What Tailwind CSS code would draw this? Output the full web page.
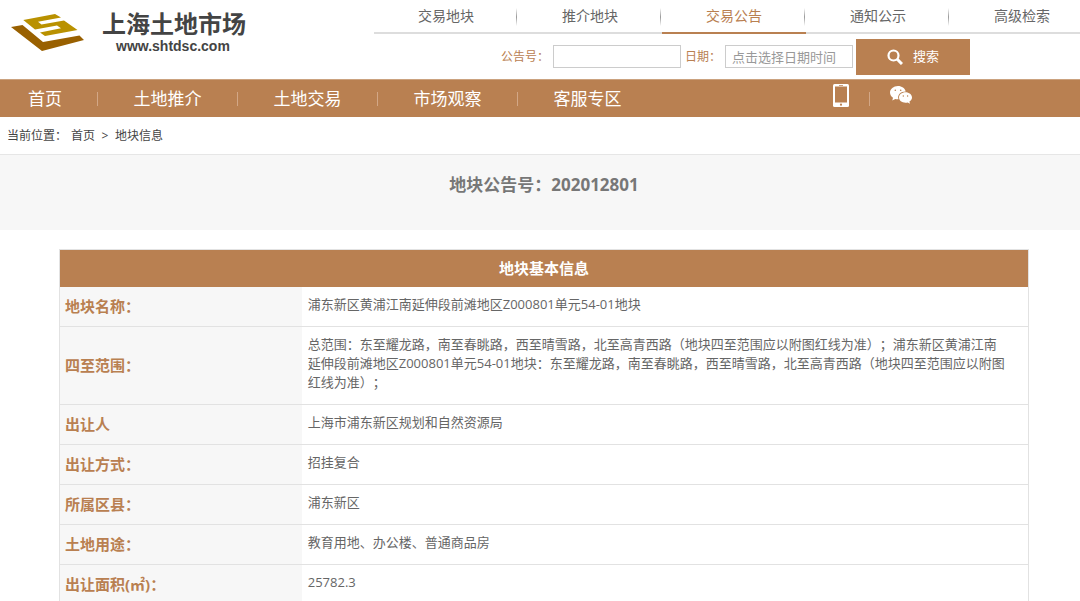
<!DOCTYPE html>
<html lang="zh-CN">
<head>
    <meta charset="UTF-8">
    <meta name="viewport" content="width=device-width, initial-scale=1.0">
    <title>上海土地市场 - 地块信息</title>
    <script src="https://cdn.jsdelivr.net/npm/@tailwindcss/browser@4"></script>
</head>
<body class="bg-white text-[#666] font-['Open_Sans','Noto_Sans_CJK_SC',sans-serif] [text-spacing-trim:space-all] overflow-x-hidden">
    <header class="flex h-[79px]">
        <a href="#" class="flex w-[374px] shrink-0 pt-2 pl-2.5 text-[#444]">
            <svg class="mt-1 h-11 w-[76px]" viewBox="0 0 76 44" aria-hidden="true">
                <path fill="#996000" d="M1 15 12.500 13 33 30 69.500 23.500 74 28 32 39Z"/>
                <path fill="#b99100" d="M13.300 8 45 2 51 5.500 28 9.700 31.500 12.500 54 8.400 67.500 18 35 24 30 20.500 51 16.300 47 13.500 25 17.500Z"/>
            </svg>
            <span class="ml-4">
                <strong class="block text-2xl leading-8 font-bold">上海土地市场</strong>
                <span class="block pl-3.5 text-sm leading-3 font-bold font-['Liberation_Sans',sans-serif]">www.shtdsc.com</span>
            </span>
        </a>
        <div class="min-w-0 flex-1">
            <nav class="flex h-[34px] overflow-hidden text-sm">
                <a href="#" class="flex w-36 shrink-0 items-center justify-center border-b-2 border-[#ddd]">交易地块</a>
                <a href="#" class="relative flex w-36 shrink-0 items-center justify-center border-b-2 border-[#ddd]">推介地块<i class="absolute left-[-2px] top-2 h-[18px] w-px bg-linear-to-b from-white via-[#999] to-white"></i></a>
                <a href="#" class="relative flex w-36 shrink-0 items-center justify-center border-b-2 border-[#b98051] text-[#b98051]">交易公告<i class="absolute left-[-2px] top-2 h-[18px] w-px bg-linear-to-b from-white via-[#999] to-white"></i></a>
                <a href="#" class="relative flex w-36 shrink-0 items-center justify-center border-b-2 border-[#ddd]">通知公示<i class="absolute left-[-2px] top-2 h-[18px] w-px bg-linear-to-b from-white via-[#999] to-white"></i></a>
                <a href="#" class="relative flex w-36 shrink-0 items-center justify-center border-b-2 border-[#ddd]">高级检索<i class="absolute left-[-2px] top-2 h-[18px] w-px bg-linear-to-b from-white via-[#999] to-white"></i></a>
            </nav>
            <form class="flex h-[45px] items-center pl-[127px] text-xs text-[#b98051]">
                <label for="notice" class="w-[52px] shrink-0">公告号：</label>
                <input id="notice" type="text" class="h-[23px] w-32 border border-[#ccc] px-1.5">
                <label for="date" class="ml-1 w-10 shrink-0">日期：</label>
                <input id="date" type="text" placeholder="点击选择日期时间" class="h-[23px] w-32 border border-[#ccc] px-1.5 text-[13px] placeholder:text-[#999]">
                <button type="submit" class="ml-[3px] flex h-9 w-[114px] items-center justify-center gap-2.5 bg-[#b98051] text-[13px] text-white">
                    <svg class="size-4" viewBox="0 0 16 16" fill="none" stroke="currentColor" aria-hidden="true">
                        <circle cx="6.500" cy="6.500" r="5" stroke-width="2.200"/>
                        <path d="m10 10 5 5" stroke-width="3"/>
                    </svg>
                    搜索
                </button>
            </form>
        </div>
    </header>

    <nav class="flex h-[38px] items-center border-t border-[#cba27f] bg-[#b98051] text-[17px] text-white">
        <a href="#" class="w-[97px] pl-7">首页</a>
        <i class="h-3.5 w-px bg-[#d3a786]"></i>
        <a href="#" class="w-[139px] text-center">土地推介</a>
        <i class="h-3.5 w-px bg-[#d3a786]"></i>
        <a href="#" class="w-[139px] text-center">土地交易</a>
        <i class="h-3.5 w-px bg-[#d3a786]"></i>
        <a href="#" class="w-[139px] text-center">市场观察</a>
        <i class="h-3.5 w-px bg-[#d3a786]"></i>
        <a href="#" class="w-[139px] text-center">客服专区</a>
        <a href="#" class="ml-44 pb-1.5" aria-label="手机版">
            <svg class="h-[23px] w-4" viewBox="0 0 16 23" aria-hidden="true">
                <rect width="16" height="23" rx="1.500" fill="#fff"/>
                <path fill="#b98051" d="M2 2.500h12v16H2zM6 1h4v.7H6z"/>
                <circle cx="8" cy="20.700" r="1.100" fill="#b98051"/>
            </svg>
        </a>
        <i class="ml-5 h-3.5 w-px bg-[#d3a786]"></i>
        <a href="#" class="ml-5 pb-2" aria-label="微信">
            <svg class="h-[18px] w-[22px]" viewBox="0 0 22 18" aria-hidden="true">
                <path fill="#fff" d="M8 0C3.500 0 0 3 0 6.600c0 2.200 1.200 4 3 5.200L2.300 14.500l3-1.500c1 .3 2 .4 3.200.3C7 9 10.500 5.500 15.700 5.500 15 2.300 11.800 0 8 0Z"/>
                <path fill="#fff" d="M15.500 6.200c-3.700 0-6.500 2.300-6.500 5.300 0 2.900 2.800 5.200 6.500 5.200.8 0 1.500-.1 2.200-.3l2.300 1.400-.6-2.200c1.600-1 2.600-2.400 2.600-4.100 0-3-2.900-5.300-6.500-5.300Z"/>
                <g fill="#b98051">
                    <circle cx="5.300" cy="4.300" r=".8"/>
                    <circle cx="10.700" cy="4.300" r=".8"/>
                    <circle cx="13.300" cy="10" r=".7"/>
                    <circle cx="17.600" cy="10" r=".7"/>
                </g>
            </svg>
        </a>
    </nav>

    <div class="flex h-[37px] items-center pl-[7px] text-xs text-[#444]">
        <span class="w-16">当前位置：</span>
        <a href="#">首页</a>
        <span class="w-5 text-center">&gt;</span>
        <a href="#">地块信息</a>
    </div>

    <div class="h-[76px] border-t border-[#e6e6e6] bg-[#f7f7f7] pt-[18px] pl-2">
        <h1 class="text-center text-[17px] leading-6 font-bold text-[#777]">地块公告号：202012801</h1>
    </div>

    <main class="mt-[19px] mr-[51px] ml-[59px]">
        <table class="w-full border-collapse border border-[#e2e2e2] text-left text-[13px] leading-[19px]">
            <thead>
                <tr><th colspan="2" class="h-[37px] bg-[#b98051] text-center text-[15px] text-white">地块基本信息</th></tr>
            </thead>
            <tbody>
                <tr class="border-b border-[#e2e2e2]">
                    <th scope="row" class="w-1/4 bg-[#f7f7f7] pl-[5px] text-[15px] text-[#b98051]">地块名称：</th>
                    <td class="px-1.5 pt-2 pb-3">浦东新区黄浦江南延伸段前滩地区Z000801单元54-01地块</td>
                </tr>
                <tr class="border-b border-[#e2e2e2]">
                    <th scope="row" class="bg-[#f7f7f7] pl-[5px] text-[15px] text-[#b98051]">四至范围：</th>
                    <td class="px-1.5 pt-2 pb-3">总范围：东至耀龙路，南至春眺路，西至晴雪路，北至高青西路（地块四至范围应以附图红线为准）；浦东新区黄浦江南<br>延伸段前滩地区Z000801单元54-01地块：东至耀龙路，南至春眺路，西至晴雪路，北至高青西路（地块四至范围应以附图<br>红线为准）；</td>
                </tr>
                <tr class="border-b border-[#e2e2e2]">
                    <th scope="row" class="bg-[#f7f7f7] pl-[5px] text-[15px] text-[#b98051]">出让人</th>
                    <td class="px-1.5 pt-2 pb-3">上海市浦东新区规划和自然资源局</td>
                </tr>
                <tr class="border-b border-[#e2e2e2]">
                    <th scope="row" class="bg-[#f7f7f7] pl-[5px] text-[15px] text-[#b98051]">出让方式：</th>
                    <td class="px-1.5 pt-2 pb-3">招挂复合</td>
                </tr>
                <tr class="border-b border-[#e2e2e2]">
                    <th scope="row" class="bg-[#f7f7f7] pl-[5px] text-[15px] text-[#b98051]">所属区县：</th>
                    <td class="px-1.5 pt-2 pb-3">浦东新区</td>
                </tr>
                <tr class="border-b border-[#e2e2e2]">
                    <th scope="row" class="bg-[#f7f7f7] pl-[5px] text-[15px] text-[#b98051]">土地用途：</th>
                    <td class="px-1.5 pt-2 pb-3">教育用地、办公楼、普通商品房</td>
                </tr>
                <tr class="border-b border-[#e2e2e2]">
                    <th scope="row" class="bg-[#f7f7f7] pl-[5px] text-[15px] text-[#b98051]">出让面积(㎡)：</th>
                    <td class="px-1.5 pt-2 pb-3">25782.3</td>
                </tr>
            </tbody>
        </table>
    </main>
</body>
</html>
